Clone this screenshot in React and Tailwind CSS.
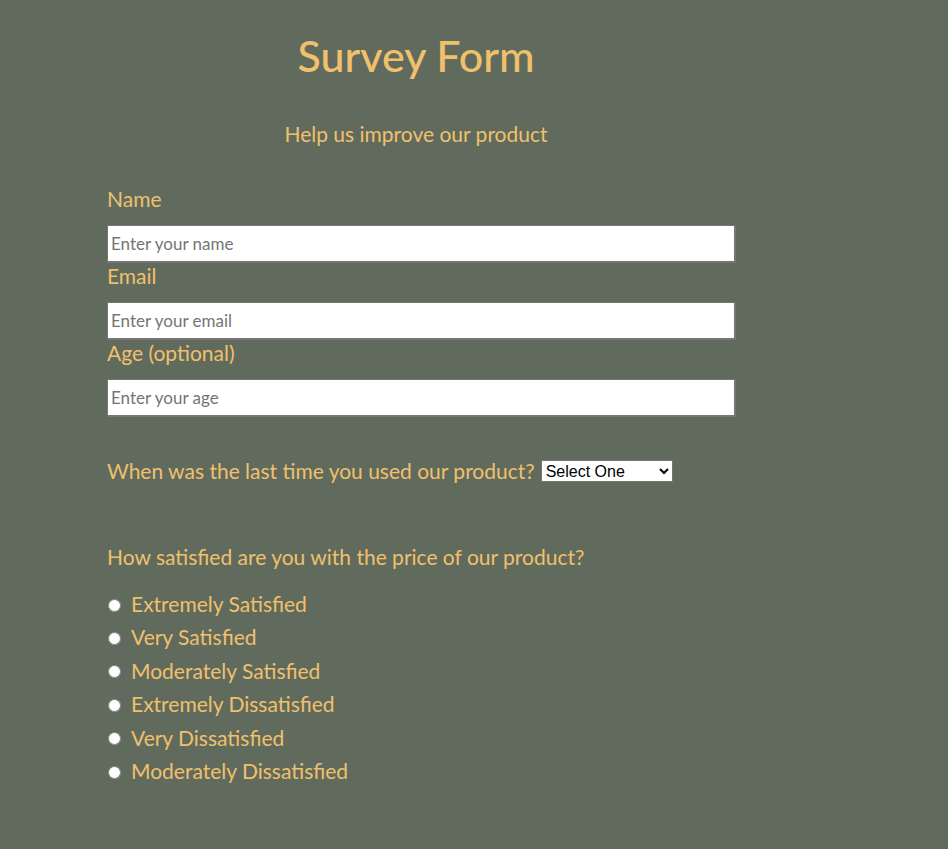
import React from 'react';

const options = [
  'Extremely Satisfied',
  'Very Satisfied',
  'Moderately Satisfied',
  'Extremely Dissatisfied',
  'Very Dissatisfied',
  'Moderately Dissatisfied',
];

const Field = ({ label, placeholder, type = 'text' }) => (
  <div className="flex flex-col">
    <label className="text-[21px] leading-[26px] h-[26px]">{label}</label>
    <input
      type={type}
      placeholder={placeholder}
      className="mt-[13px] w-[629px] h-[38px] bg-white border border-[#767676] border-r-2 border-b-2 px-[3px] text-[17px] text-black placeholder:text-[#757575] outline-none"
    />
  </div>
);

export default function App() {
  return (
    <div className="min-h-[849px] bg-[#616b5d] text-[#f0c06c] font-['Lato','Liberation_Sans',sans-serif]">
      <div className="pl-[107px] pt-[32px] pb-[60px] w-[725px]">
        <h1 className="text-center text-[43px] leading-[48px] font-medium">Survey Form</h1>
        <p className="text-center text-[21px] leading-[26px] mt-[41px]">Help us improve our product</p>

        <form className="mt-[39px] flex flex-col">
          <Field label="Name" placeholder="Enter your name" />
          <Field label="Email" placeholder="Enter your email" type="email" />
          <Field label="Age (optional)" placeholder="Enter your age" type="number" />
        </form>

        <div className="mt-[41px] flex items-center">
          <span className="text-[21px] leading-[26px] whitespace-nowrap">When was the last time you used our product?</span>
          <select className="ml-[6px] w-[132px] h-[22px] shrink-0 bg-white text-black text-[16px] leading-[18px] font-['Liberation_Sans',sans-serif] border border-[#767676]">
            <option>Select One</option>
            <option>Today</option>
            <option>This week</option>
            <option>This month</option>
          </select>
        </div>

        <p className="mt-[60px] text-[21px] leading-[26px]">How satisfied are you with the price of our product?</p>

        <div className="mt-[17px] flex flex-col">
          {options.map((o) => (
            <label key={o} className="flex items-center h-[33.4px] text-[21px] whitespace-nowrap">
              <input type="radio" name="price" className="ml-[1px] mr-[10px] w-[13px] h-[13px] mt-[3px]" />
              <span>{o}</span>
            </label>
          ))}
        </div>
      </div>
    </div>
  );
}
